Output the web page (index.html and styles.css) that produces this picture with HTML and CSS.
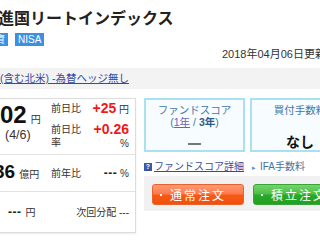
FILE: index.html
```html
<!DOCTYPE html>
<html lang="ja">
<head>
    <meta charset="UTF-8" />
    <title>先進国リートインデックス</title>
    <link rel="stylesheet" href="styles.css">
</head>
<body>
<div class="page">
    <h1 class="fund-title">進国リートインデックス</h1>
    <div class="tags">
        <span class="tag">投資</span>
        <span class="tag">NISA</span>
    </div>
    <p class="updated">2018年04月06日更新</p>

    <div class="fund-bar"><a href="#">(含む北米) -為替ヘッジ無し</a></div>

    <div class="main">
        <!-- 基準価額 -->
        <div class="quote">
            <div class="quote-row row-price">
                <div class="price">
                    <div class="price-main"><span class="price-num">02</span><span class="unit">円</span></div>
                    <div class="price-date">(4/6)</div>
                </div>
                <div class="change">
                    <span class="label">前日比</span>
                    <span class="val"><b class="up">+25</b> 円</span>
                    <span class="label">前日比率</span>
                    <span class="val"><b class="up">+0.26</b><br>%</span>
                </div>
            </div>
            <div class="quote-row row-assets">
                <div class="price">
                    <span class="assets-num">36</span><span class="unit">億円</span>
                </div>
                <span class="label">前年比</span>
                <span class="val-right"><b class="dashes">---</b> %</span>
            </div>
            <div class="quote-row row-dist">
                <div class="price dist"><b class="dashes">---</b><span class="unit">円</span></div>
                <span class="val-right">次回分配 ---</span>
            </div>
        </div>

        <!-- スコア・注文 -->
        <div class="side">
            <div class="scores">
                <div class="score">
                    <div class="score-title">ファンドスコア<br>(<a href="#">1年</a> / <b>3年</b>)</div>
                    <div class="score-dash"></div>
                </div>
                <div class="score score-fee">
                    <div class="score-title">買付手数料</div>
                    <div class="score-value">なし</div>
                </div>
            </div>
            <div class="side-links">
                <a href="#" class="help-link"><span class="help-icon">?</span>ファンドスコア詳細</a>
                <span class="ifa"><span class="arrow">&#9656;</span>IFA手数料</span>
            </div>
            <div class="orders">
                <button class="order-btn btn-normal">通常注文</button>
                <button class="order-btn btn-tsumitate">積立注文</button>
            </div>
        </div>
    </div>
</div>
</body>
</html>
```

FILE: styles.css
```css
/* Base */
* {
    box-sizing: border-box;
}

body {
    margin: 0;
    width: 320px;
    height: 240px;
    overflow: hidden;
    background: #fff;
    color: #222;
    font-family: "Liberation Sans", "Noto Sans CJK JP", sans-serif;
}

.page {
    width: 352px;
}

/* En-tête */
.fund-title {
    margin: 0 0 0 -2px;
    padding-top: 9px;
    font-size: 16px;
    line-height: 20px;
    font-weight: bold;
    white-space: nowrap;
}

.tags {
    display: flex;
    gap: 7px;
    margin: 4px 0 0 -18px;
}

.tag {
    background: #3d8fe2;
    color: #fff;
    font-size: 10px;
    line-height: 13px;
    padding: 0 3px;
}

.updated {
    margin: 1px 0 0;
    padding-left: 222px;
    font-size: 11px;
    line-height: 14px;
    color: #333;
    white-space: nowrap;
}

.fund-bar {
    margin-top: 7px;
    height: 21px;
    background: #f3f3f3;
    font-size: 10.5px;
    line-height: 21px;
}

.fund-bar a {
    color: #3a4aa0;
}

/* Bloc principal */
.main {
    display: flex;
    align-items: flex-start;
    gap: 8px;
    margin-top: 9px;
}

.quote {
    width: 137px;
    margin-left: -1px;
    border: 1px solid #dcdcdc;
    box-shadow: 0 1px 2px rgba(0, 0, 0, 0.08);
    font-size: 10px;
    line-height: 13px;
    color: #333;
}

.quote-row {
    display: flex;
    padding-right: 6px;
    border-top: 1px solid #e2e2e2;
}

.quote-row:first-child {
    border-top: 0;
}

.price {
    width: 51px;
    flex: none;
}

.row-price {
    height: 55px;
    padding-top: 3px;
}

.price-main {
    display: flex;
    align-items: baseline;
}

.price-num {
    font-size: 24px;
    line-height: 26px;
    font-weight: bold;
    color: #111;
}

.unit {
    margin-left: 4px;
    font-size: 10px;
}

.price-date {
    margin-left: 5px;
    font-size: 12.5px;
    line-height: 14px;
}

.change {
    flex: 1;
    display: grid;
    grid-template-columns: 30px 1fr;
    row-gap: 3px;
}

.val {
    text-align: right;
}

.up {
    color: #f01818;
    font-size: 14px;
}

.dashes {
    font-size: 12px;
    letter-spacing: 0.5px;
    color: #222;
}

.row-assets,
.row-dist {
    align-items: center;
}

.row-assets {
    height: 37px;
}

.row-dist {
    height: 41px;
}

.assets-num {
    margin-left: -6px;
    font-size: 19px;
    font-weight: bold;
    color: #111;
}

.val-right {
    margin-left: auto;
}

.dist {
    padding-left: 8px;
}

/* Colonne de droite */
.side {
    width: 206px;
}

.scores {
    display: flex;
    gap: 5px;
}

.score {
    width: 101px;
    height: 54px;
    border: 2px solid #a9e1f3;
    background: #f6fcff;
    text-align: center;
}

.score-fee {
    width: 100px;
}

.score-title {
    padding-top: 4px;
    font-size: 10.5px;
    line-height: 12px;
    color: #4577a8;
}

.score-title a {
    color: #6b62b4;
}

.score-title b {
    color: #2c5c8c;
}

.score-dash {
    width: 13px;
    height: 2px;
    margin: 15px auto 0;
    background: #777;
}

.score-value {
    margin-top: 15px;
    font-size: 14px;
    font-weight: bold;
    color: #111;
}

.side-links {
    display: flex;
    align-items: center;
    height: 12px;
    margin-top: 9px;
    font-size: 10px;
    line-height: 12px;
}

.help-link {
    color: #3a4aa0;
    display: flex;
    align-items: center;
}

.help-icon {
    width: 8px;
    height: 8px;
    margin-right: 2px;
    background: #3a5aa6;
    color: #fff;
    font-size: 7px;
    line-height: 8px;
    font-weight: bold;
    text-align: center;
}

.ifa {
    margin-left: 8px;
    color: #4a6fa0;
}

.arrow {
    font-size: 7px;
    margin-right: 4px;
    color: #5a8fc0;
}

/* Boutons de commande */
.orders {
    display: flex;
    gap: 9px;
    height: 35px;
    margin-top: 3px;
    padding: 8px 0 0 8px;
    background: #f1f1f1;
}

.order-btn {
    position: relative;
    width: 92px;
    height: 21px;
    padding: 0;
    border-radius: 3px;
    color: #fff;
    font-family: inherit;
    font-size: 12px;
    letter-spacing: 2px;
}

.order-btn::before {
    content: "";
    position: absolute;
    left: 7px;
    top: 9px;
    width: 2px;
    height: 2px;
    background: #fff;
}

.btn-normal {
    border: 1px solid #e8622c;
    background: linear-gradient(#ff9a74 0%, #ff7a4c 45%, #f55a14 55%, #f2500c 100%);
}

.btn-tsumitate {
    border: 1px solid #3aa43a;
    background: linear-gradient(#74d46a 0%, #4cc046 45%, #28a828 55%, #22a024 100%);
}
```
